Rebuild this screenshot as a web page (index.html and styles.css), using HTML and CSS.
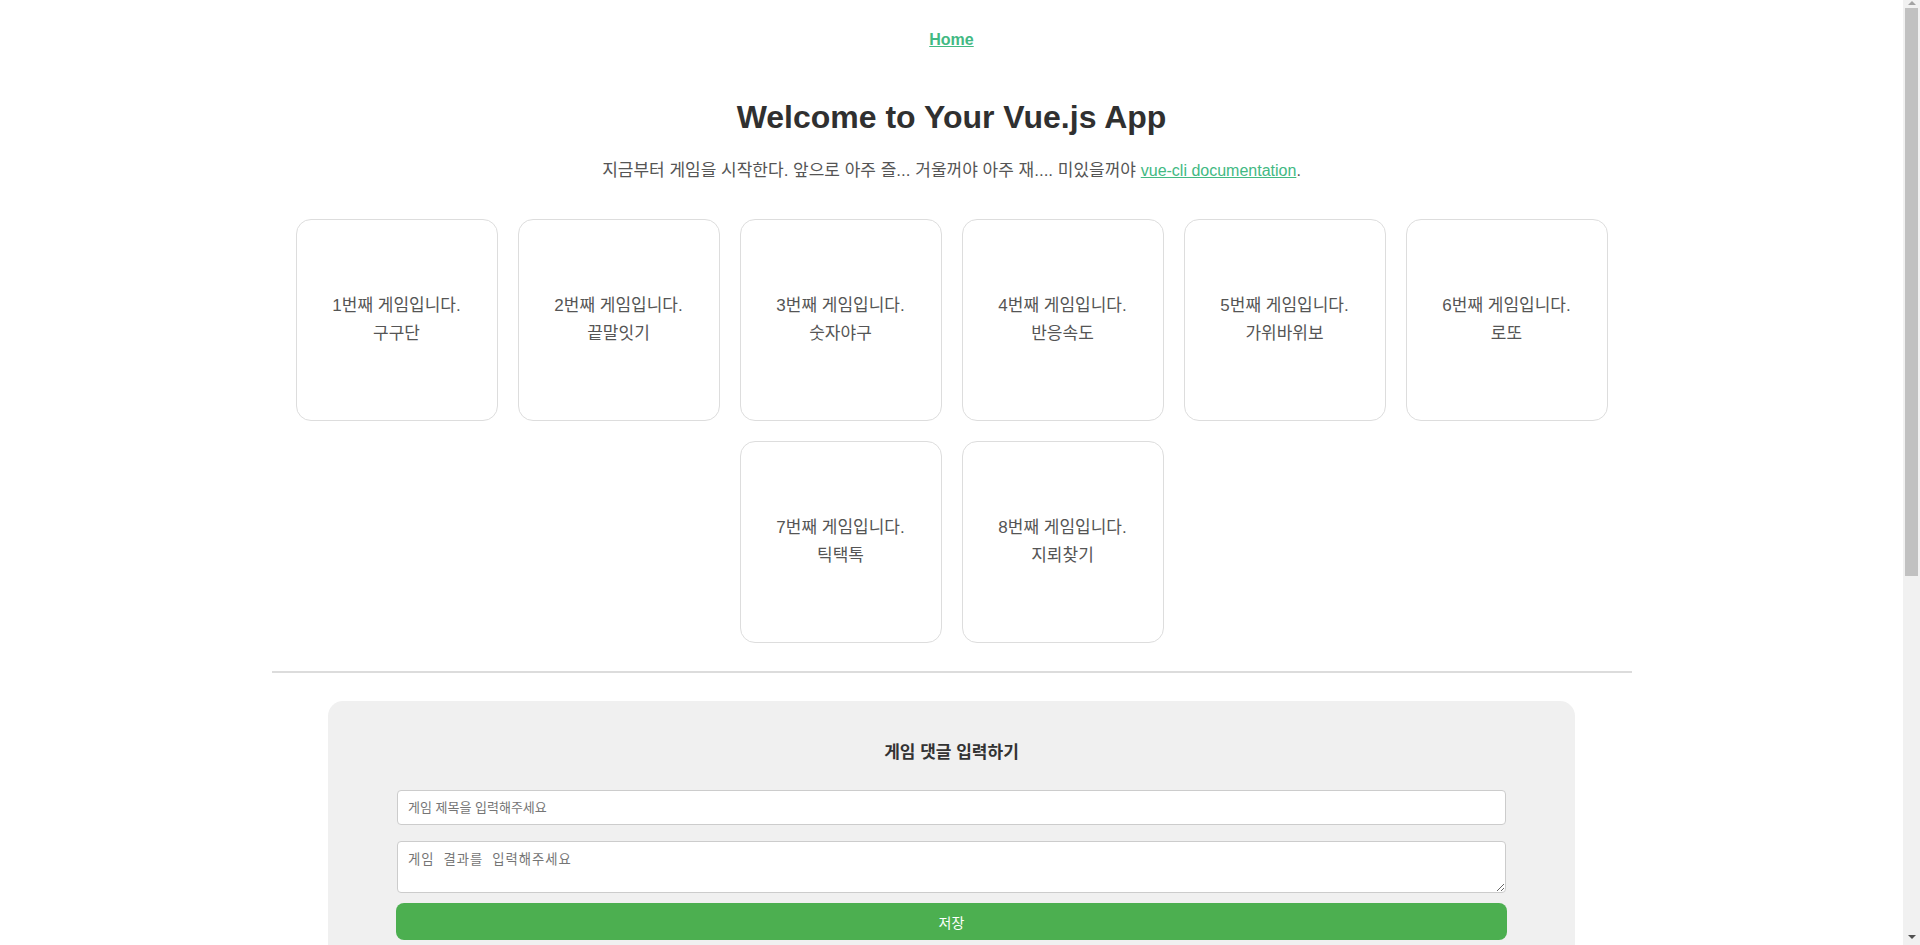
FILE: index.html
```html
<!DOCTYPE html>
<html lang="ko">
<head>
<meta charset="utf-8">
<title>Vue App</title>
<link rel="stylesheet" href="styles.css">
</head>
<body>
<div id="app">
  <nav class="nav"><a href="#" class="nav-link">Home</a></nav>
  <main class="home">
    <h1 class="title">Welcome to Your Vue.js App</h1>
    <p class="intro"><span class="intro-text">지금부터 게임을 시작한다. 앞으로 아주 즐... 거울꺼야 아주 재.... 미있을꺼야 </span><a href="#" class="intro-link">vue-cli documentation</a>.</p>
    <section class="board">
      <ul class="game-list">
        <li class="game-card"><span class="game-no">1번째 게임입니다.</span><span class="game-name">구구단</span></li>
        <li class="game-card"><span class="game-no">2번째 게임입니다.</span><span class="game-name">끝말잇기</span></li>
        <li class="game-card"><span class="game-no">3번째 게임입니다.</span><span class="game-name">숫자야구</span></li>
        <li class="game-card"><span class="game-no">4번째 게임입니다.</span><span class="game-name">반응속도</span></li>
        <li class="game-card"><span class="game-no">5번째 게임입니다.</span><span class="game-name">가위바위보</span></li>
        <li class="game-card"><span class="game-no">6번째 게임입니다.</span><span class="game-name">로또</span></li>
        <li class="game-card"><span class="game-no">7번째 게임입니다.</span><span class="game-name">틱택톡</span></li>
        <li class="game-card"><span class="game-no">8번째 게임입니다.</span><span class="game-name">지뢰찾기</span></li>
      </ul>
      <hr class="divider">
      <div class="comment-box">
        <h3 class="comment-title">게임 댓글 입력하기</h3>
        <form class="comment-form">
          <input class="field" type="text" placeholder="게임 제목을 입력해주세요">
          <textarea class="field area" placeholder="게임 결과를 입력해주세요"></textarea>
          <button class="save" type="button">저장</button>
        </form>
        <div class="comment-list"></div>
      </div>
    </section>
  </main>
</div>
<aside class="scrollbar" aria-hidden="true">
  <span class="sb-arrow sb-up"></span>
  <span class="sb-thumb"></span>
  <span class="sb-track"></span>
  <span class="sb-arrow sb-down"></span>
</aside>
</body>
</html>
```

FILE: styles.css
```css
html, body {
  margin: 0;
  padding: 0;
  background: #fff;
}

body {
  display: flex;
  align-items: flex-start;
}

#app {
  flex: 1;
  min-width: 0;
  font-family: "Liberation Sans", Arial, "Noto Sans CJK KR", sans-serif;
  color: #555;
  text-align: center;
}

/* emulated classic browser scrollbar */
.scrollbar {
  flex: none;
  position: sticky;
  top: 0;
  width: 17px;
  height: 100vh;
  background: #f1f1f1;
  display: flex;
  flex-direction: column;
  align-items: center;
}

.sb-arrow {
  flex: none;
  width: 0;
  height: 0;
  border-left: 4px solid transparent;
  border-right: 4px solid transparent;
}

.sb-up {
  margin-top: 1px;
  border-bottom: 4px solid #a3a3a3;
}

.sb-down {
  margin-bottom: 6px;
  border-top: 4px solid #505050;
}

.sb-thumb {
  flex: none;
  width: 13px;
  height: 568px;
  margin-top: 3px;
  background: #c1c1c1;
}

.sb-track {
  flex: 1;
}

.nav {
  padding: 31px 30px 29px;
  line-height: 18px;
  font-size: 16px;
}

.nav-link {
  font-weight: bold;
  color: #42b983;
  text-decoration: underline;
}

.title {
  margin: 21px 0 0;
  font-size: 32px;
  line-height: 37px;
  font-weight: bold;
  color: #303030;
}

.intro {
  margin: 23px 0 0;
  font-size: 16px;
  line-height: 24px;
  color: #555;
}

.intro-text {
  font-size: 17px;
}

.intro-link {
  color: #42b983;
}

.board {
  width: 1360px;
  margin: 0 auto;
}

.game-list {
  list-style: none;
  margin: 26px 0 0;
  padding: 0;
  display: flex;
  flex-wrap: wrap;
  justify-content: center;
}

.game-card {
  box-sizing: border-box;
  width: 202px;
  height: 202px;
  margin: 10px;
  border: 1px solid #ddd;
  border-radius: 15px;
  display: flex;
  flex-direction: column;
  justify-content: center;
  align-items: center;
  font-size: 17px;
  line-height: 28px;
  color: #555;
}

.divider {
  margin: 18px 0 0;
  border: 0;
  height: 2px;
  background: #dcdcdc;
}

.comment-box {
  box-sizing: border-box;
  width: 1247px;
  min-height: 700px;
  margin: 28px auto 120px;
  padding: 40px 69px 40px;
  background: #f0f0f0;
  border-radius: 15px;
}

.comment-title {
  margin: 0;
  font-size: 17px;
  line-height: 24px;
  font-weight: bold;
  color: #333;
}

.comment-form {
  display: flex;
  flex-direction: column;
  margin-top: 25px;
}

.field {
  box-sizing: border-box;
  width: 100%;
  height: 35px;
  margin: 0;
  padding: 0 10px;
  border: 1px solid #ccc;
  border-radius: 4px;
  background: #fff;
  font-family: "Liberation Sans", Arial, "Noto Sans CJK KR", sans-serif;
  font-size: 13px;
  color: #333;
}

.field::placeholder {
  color: #757575;
}

.area {
  height: 52px;
  margin-top: 16px;
  padding: 7px 10px;
  resize: vertical;
  font-family: "Liberation Mono", "Noto Sans CJK KR", monospace;
  font-size: 13.33px;
  letter-spacing: 1px;
}

.save {
  box-sizing: border-box;
  width: calc(100% + 2px);
  height: 37px;
  margin: 10px -1px 0;
  border: 0;
  border-radius: 8px;
  background: #4caf50;
  color: #fff;
  font-family: "Liberation Sans", Arial, "Noto Sans CJK KR", sans-serif;
  font-size: 14px;
}
```
